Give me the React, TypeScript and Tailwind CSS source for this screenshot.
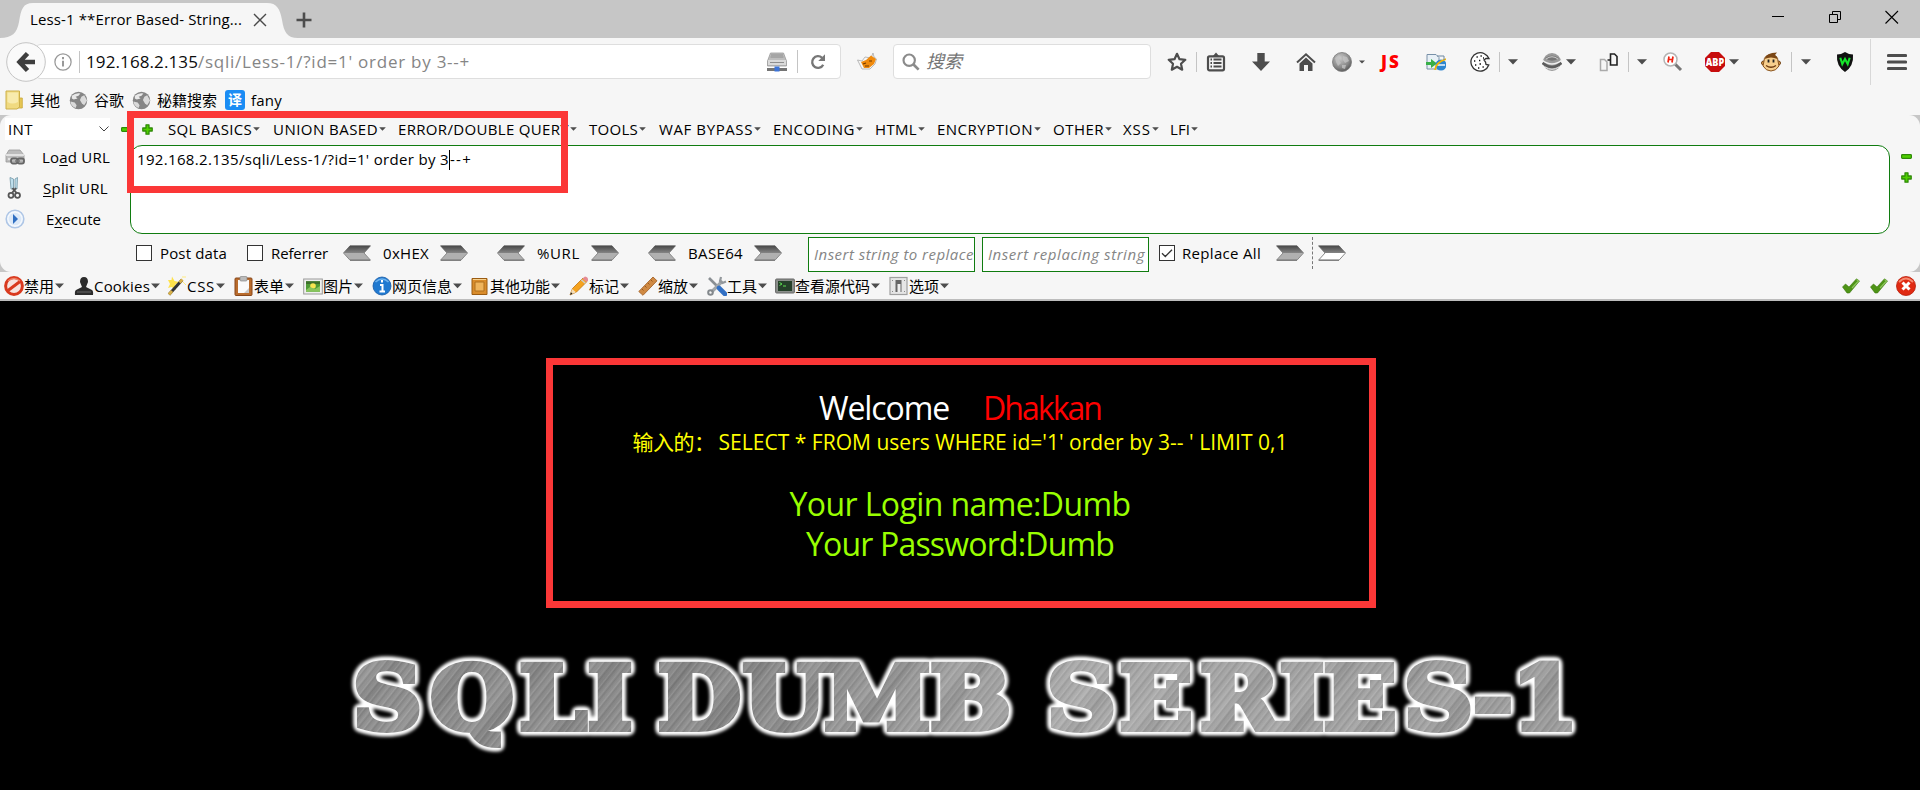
import { useLayoutEffect, useRef, useState } from "react";
import type { ReactNode } from "react";

const SANS = "font-['Open_Sans','Noto_Sans_CJK_SC',sans-serif]";

/* Text set to a given width: letter spacing is worked out after measuring. */
function Label({ children, w, className = "" }: { children: ReactNode; w: number; className?: string }) {
  const ref = useRef<HTMLSpanElement>(null);
  const [spacing, setSpacing] = useState(0);
  useLayoutEffect(() => {
    const el = ref.current;
    if (!el) return;
    const n = (el.textContent ?? "").length;
    setSpacing((w - el.getBoundingClientRect().width) / n);
  }, [w]);
  return (
    <span className={`block shrink-0 whitespace-pre ${className}`} style={{ width: w }}>
      <span ref={ref} className="inline-block" style={{ letterSpacing: spacing }}>
        {children}
      </span>
    </span>
  );
}

function Svg({ children, className = "w-5 h-5", box = "0 0 20 20" }: { children: ReactNode; className?: string; box?: string }) {
  return (
    <svg viewBox={box} className={`block shrink-0 ${className}`} fill="none">
      {children}
    </svg>
  );
}

function Caret({ className = "w-[10px] h-[6px]" }: { className?: string }) {
  return (
    <Svg box="0 0 10 6" className={className}>
      <path d="M0 0.3H10L5 5.5Z" fill="#4d4d4d" />
    </Svg>
  );
}

function Plus() {
  return (
    <Svg box="0 0 11 11" className="w-[11px] h-[11px]">
      <path d="M4 .8H7V4H10.2V7H7V10.2H4V7H.8V4H4Z" fill="#4fd000" stroke="#2f8a08" strokeWidth="1.3" strokeLinejoin="round" />
    </Svg>
  );
}

function Minus() {
  return (
    <Svg box="0 0 11 5" className="w-[11px] h-[5px]">
      <rect x=".6" y=".6" width="9.8" height="3.8" rx=".8" fill="#4fd000" stroke="#2f8a08" strokeWidth="1.2" />
    </Svg>
  );
}

function Arrow({ left = false, hollow = false, className = "" }: { left?: boolean; hollow?: boolean; className?: string }) {
  return (
    <Svg box="0 0 28 16" className={`w-7 h-4 ${left ? "-scale-x-100" : ""} ${className}`}>
      <path d="M.5 .8H21L27.5 8L21 15.2H.5L7 8Z" fill={hollow ? "#fff" : "#b0b0b0"} stroke="#8a8a8a" strokeWidth="1" />
      <path d="M.5 .8H21L27.5 8H7Z" fill="url(#arrowDark)" />
      <path d="M1 15.2H21" stroke="#777" strokeWidth="1.2" />
    </Svg>
  );
}

function Check({ on = false, className = "" }: { on?: boolean; className?: string }) {
  return (
    <Svg box="0 0 16 16" className={`w-4 h-4 ${className}`}>
      <rect x=".5" y=".5" width="15" height="15" fill="#fff" stroke="#333" />
      {on && <path d="M3 8.2L6.3 11.5L13 4.7" stroke="#333" strokeWidth="1.3" />}
    </Svg>
  );
}

function Globe({ className = "" }: { className?: string }) {
  return (
    <Svg className={`w-[19px] h-[19px] ${className}`}>
      <circle cx="10" cy="10" r="9.2" fill="#858585" />
      <path d="M3 5Q7 1.500 12 2.500L10 5L7 6L9 8L5 9L3 8Z" fill="#e8e8e8" />
      <path d="M13 6L16 4.500L19 10L16 15L13.500 13L11.500 9.500Z" fill="#dadada" />
      <path d="M1.500 11L6 12L8 15L7 18Q2 16 1.500 11Z" fill="#dadada" />
    </Svg>
  );
}

function Sep({ className = "h-5" }: { className?: string }) {
  return <div className={`w-px shrink-0 bg-[#c4c4c4] ${className}`} />;
}

function TitleBar() {
  return (
    <div className="flex h-[38px] bg-[#c6c6c6]">
      <div className="relative h-[38px] w-[298px] shrink-0">
        <svg viewBox="0 0 298 38" className="absolute inset-0 h-[38px] w-[298px]">
          <path d="M0 38C12 38 17 33 19 22C21 9 23 3 33 3H267C277 3 280 9 282 20C284 32 287 38 298 38Z" fill="#f6f6f6" />
        </svg>
        <div className="relative flex h-[38px] items-center pl-[30px] pt-0.5">
          <Label w={212} className="-mt-0.5 text-[15px] text-black">Less-1 **Error Based- String...</Label>
          <Svg box="0 0 14 14" className="ml-[11px] h-[14px] w-[14px]">
            <path d="M1 1L13 13M13 1L1 13" stroke="#4a4a4a" strokeWidth="1.400" />
          </Svg>
        </div>
      </div>
      <Svg box="0 0 16 16" className="-ml-0.5 mt-3 h-4 w-4">
        <path d="M8 .5V15.500M.5 8H15.500" stroke="#4d4d4d" strokeWidth="2.600" />
      </Svg>
      <div className="ml-auto flex pr-[21px] pt-[10px]">
        <Svg box="0 0 14 14" className="mr-[43px] h-[14px] w-[14px]">
          <path d="M1 6.500H13" stroke="#000" />
        </Svg>
        <Svg box="0 0 14 14" className="mr-[43px] h-[14px] w-[14px]">
          <path d="M1.500 4.500H9.500V12.500H1.500ZM4.500 4V1.500H12.500V9.500H10" stroke="#000" />
        </Svg>
        <Svg box="0 0 14 14" className="h-[14px] w-[14px]">
          <path d="M.5 1L13 13.500M13 1L.5 13.500" stroke="#000" strokeWidth="1.100" />
        </Svg>
      </div>
    </div>
  );
}

function NavIcons() {
  return (
    <div className="flex items-center">
      <Svg className="ml-4 h-5 w-5">
        <path d="M10 1.800L12.500 7.200L18.300 7.800L14 11.800L15.200 17.700L10 14.800L4.800 17.700L6 11.800L1.700 7.800L7.500 7.200Z" stroke="#4d4d4d" strokeWidth="2.200" strokeLinejoin="round" />
      </Svg>
      <Sep className="ml-[9px] h-5" />
      <Svg className="ml-[9px] h-5 w-5">
        <path d="M6.500 4.500L10 .5L13.500 4.500Z" fill="#4d4d4d" />
        <rect x="2" y="4.300" width="16" height="14" rx="1.500" stroke="#4d4d4d" strokeWidth="2.200" />
        <path d="M4.500 7.500H6M7.500 7.500H15.500M4.500 11H6M7.500 11H15.500M4.500 14.500H6M7.500 14.500H15.500" stroke="#4d4d4d" strokeWidth="1.800" />
      </Svg>
      <Svg className="ml-[25px] h-5 w-5">
        <path d="M6.300 1H13.700V9.500H19L10 19L1 9.500H6.300Z" fill="#4d4d4d" />
      </Svg>
      <Svg className="ml-[25px] h-5 w-5">
        <path d="M1 10.500L10 2.300L19 10.500" stroke="#4d4d4d" strokeWidth="2" />
        <path d="M3.500 11.500L10 5.600L16.500 11.500V19H12V13H8V19H3.500Z" fill="#4d4d4d" />
      </Svg>
      <Svg className="ml-4 h-5 w-5">
        <circle cx="10" cy="10" r="9.500" fill="url(#ball)" stroke="#777" strokeWidth=".8" />
        <path d="M3 6L7 3L9 5L7 8L9 11L6 14L4 10ZM11 4L15 5L17 9L13 11L11 8ZM10 13L14 13L13 17L10 16Z" fill="#c4c4c4" opacity=".75" />
      </Svg>
      <Caret className="ml-[7px] h-[4px] w-[6px]" />
      <Label w={20} className="ml-4 text-[17px] font-extrabold leading-5 text-[#f00]">JS</Label>
      <Svg className="ml-[25px] h-5 w-5">
        <path d="M1 2.500H10L13 5.500V17H1Z" fill="#e8f0f6" stroke="#7890a8" />
        <path d="M0 10H5V7L11 11.500L5 16V13H0Z" fill="#38b048" />
        <circle cx="15" cy="13" r="5.500" fill="#2e86d0" />
        <path d="M11 13H19" stroke="#fff" strokeWidth="1.400" />
        <path d="M9 18Q10 10 20 7" stroke="#f4b400" strokeWidth="1.800" />
        <path d="M11 4H18V8" stroke="#6d87a0" />
      </Svg>
      <Svg className="ml-[24px] h-5 w-5">
        <path d="M14.500 1.800A9.200 9.200 0 1 0 18.800 13L16 12.500L15.500 10L14 8L16 6.500L19 6.500Q17.500 3 14.500 1.800Z" fill="#fff" stroke="#333" strokeWidth="1.300" />
        <path d="M6.500 5h1.300M10.500 4h1.300M4 9h1.300M9 8.500h1.300M5 13h1.300M9.500 12h1.500M12.500 15h1.300M8 16h1.300M13 6h1" stroke="#111" strokeWidth="1.300" />
      </Svg>
      <Sep className="ml-[9px] h-5" />
      <Caret className="ml-[8px] h-[6px] w-[10px]" />
      <Svg className="ml-[24px] h-5 w-5">
        <circle cx="10" cy="10" r="9" fill="#9a9a9a" />
        <path d="M0 8Q10 16 20 8" stroke="#f0f0f0" strokeWidth="1.500" />
        <path d="M3 6Q10 1 17 6Q10 11.500 3 6Z" fill="#777" />
        <path d="M4 7Q10 2.500 16 7" stroke="#ccc" strokeWidth="1" />
        <path d="M.5 11Q10 19 19.500 11" stroke="#5d5d5d" strokeWidth="2.400" />
        <path d="M3 15Q10 19.500 17 15" stroke="#e8e8e8" strokeWidth="1" />
      </Svg>
      <Caret className="ml-1 h-[6px] w-[10px]" />
      <Svg className="ml-[23px] h-5 w-5">
        <path d="M1.500 7.500H5.500L8 10V18.500H1.500Z" stroke="#aaa" strokeWidth="1.500" />
        <path d="M11.500 2H15.500L18 4.500V13H11.500Z" stroke="#222" strokeWidth="1.600" />
        <path d="M8.500 8H11.500" stroke="#222" strokeWidth="1.500" />
      </Svg>
      <Sep className="ml-[9px] h-5" />
      <Caret className="ml-[8px] h-[6px] w-[10px]" />
      <Svg className="ml-[16px] h-5 w-5">
        <path d="M12 12L18 18" stroke="#777" strokeWidth="3" />
        <circle cx="7.500" cy="7.500" r="6.500" fill="#fff" stroke="#b4b4b4" strokeWidth="1.500" />
        <path d="M6 4.500L5 10.500M10 4.500L9 10.500M5.500 7.500H9.500" stroke="#e21" strokeWidth="1.700" />
      </Svg>
      <Svg className="ml-[22px] h-5 w-5">
        <path d="M6 0H14L20 6V14L14 20H6L0 14V6Z" fill="#c70d0d" />
        <text x=".8" y="13.800" textLength="18.400" lengthAdjust="spacingAndGlyphs" fontSize="10.500" fontWeight="800" fill="#fff" fontFamily="Open Sans">ABP</text>
      </Svg>
      <Caret className="ml-1 h-[6px] w-[10px]" />
      <Svg className="ml-[22px] h-5 w-5">
        <circle cx="2.500" cy="11" r="2" fill="#d89a4a" stroke="#704214" />
        <circle cx="17.500" cy="11" r="2" fill="#d89a4a" stroke="#704214" />
        <path d="M3 9Q3 3 10 3T17 9L18 14Q15 19 10 19T2 14Z" fill="#f7cf8d" stroke="#8a5520" />
        <path d="M3.500 7Q5 .5 16 .5L14 3Q16.500 4.500 16.500 7Q10 4 3.500 7Z" fill="#7b4716" />
        <path d="M7.500 7.500V10.500M12.500 7.500V10.500" stroke="#222" strokeWidth="1.800" />
        <path d="M5 13.500Q10 17 15 13.500" stroke="#6d3a10" strokeWidth="1.300" />
      </Svg>
      <Sep className="ml-[10px] h-5" />
      <Caret className="ml-[9px] h-[6px] w-[10px]" />
      <Svg className="ml-[24px] h-5 w-5">
        <path d="M10 0Q14 2.500 18 2.500Q19 14 10 20Q1 14 2 2.500Q6 2.500 10 0Z" fill="#111" />
        <path d="M5.300 5.800L7.300 12L10 7L12.700 12L14.700 5.800" stroke="#15e52a" strokeWidth="2.100" />
      </Svg>
      <Sep className="ml-[15px] h-[46px] opacity-60" />
      <Svg className="ml-4 h-5 w-5">
        <path d="M1.500 3.500H18.500M1.500 10H18.500M1.500 16.500H18.500" stroke="#4d4d4d" strokeWidth="3.200" strokeLinecap="round" />
      </Svg>
    </div>
  );
}

function NavBar() {
  return (
    <div className="flex h-[47px] items-center">
      <div className="relative ml-[6px] flex h-10 w-[836px] shrink-0 items-center">
        <div className="ml-[30px] flex h-[35px] w-[805px] items-center rounded-sm border border-[#dedede] bg-white pl-[17px]">
          <Svg className="h-[18px] w-[18px]">
            <circle cx="10" cy="10" r="9" stroke="#999" strokeWidth="1.400" />
            <path d="M10 4.500V7M10 8.500V15" stroke="#999" strokeWidth="2.200" />
          </Svg>
          <Sep className="ml-[7px] h-[22px]" />
          <div className="ml-[6px] flex text-[17px] leading-6">
            <Label w={112} className="text-[#0c0c0c]">192.168.2.135</Label>
            <Label w={272} className="text-[#858585]">/sqli/Less-1/?id=1' order by 3--+</Label>
          </div>
          <Svg className="ml-[297px] h-5 w-5">
            <path d="M3.500 1H16.500L19.500 9V14H.5V9Z" fill="#bdbdbd" stroke="#999" strokeWidth=".8" />
            <path d="M1 8H19V13H1Z" fill="#dadada" />
            <path d="M4 3H16M3.500 5H16.500M3 10.500H17" stroke="#8e8e8e" />
            <path d="M0 16H20V19H0Z" fill="#747474" />
            <rect x="7.500" y="14.500" width="5" height="5" fill="#3d74d8" />
          </Svg>
          <Sep className="ml-[10px] h-[23px]" />
          <Svg className="ml-[11px] h-[18px] w-[18px]">
            <path d="M15.800 13A6.500 6.500 0 1 1 14.500 5.300" stroke="#777" strokeWidth="2.600" />
            <path d="M17.800 1.500V9H10.300Z" fill="#777" />
          </Svg>
        </div>
        <Svg box="0 0 40 40" className="absolute left-0 top-0 h-10 w-10">
          <circle cx="20" cy="20" r="19.300" fill="#fafafa" stroke="#c4c4c4" strokeWidth="1" />
          <path d="M29 20H15M21.500 11.500L13.500 20L21.500 28.500" stroke="#3e3e3e" strokeWidth="4.600" />
        </Svg>
      </div>
      <Svg className="ml-[15px] h-5 w-5">
        <path d="M.5 8L5 9L8 5L14 6L16 1L17 5L19.500 7L18 12L13 17H5Z" fill="#f6f6f6" stroke="#aaa" strokeWidth=".8" />
        <path d="M4 10L9 8L14 3.500L19 7L17 12L12 16H7Z" fill="#f08a0c" />
        <path d="M6 12L9 11M12 9L15 9M8 14L12 14" stroke="#713900" strokeWidth="1.200" />
      </Svg>
      <div className="ml-4 flex h-[35px] w-[258px] shrink-0 items-center rounded-sm border border-[#dedede] bg-white pl-2">
        <Svg className="h-[18px] w-[18px]">
          <circle cx="8" cy="8" r="6.300" stroke="#8b8b8b" strokeWidth="2.400" />
          <path d="M12.500 12.500L18.500 18.500" stroke="#8b8b8b" strokeWidth="3" />
        </Svg>
        <span className="ml-[6px] text-[18px] italic text-[#757575]">搜索</span>
      </div>
      <NavIcons />
    </div>
  );
}

function Bookmarks() {
  return (
    <div className="flex h-[30px] items-center pl-[5px] text-[15px] text-black">
      <Svg className="h-5 w-[18px]" box="0 0 18 20">
        <path d="M14 8H17.300V18H9L14 16Z" fill="#e6c654" stroke="#c9a83a" strokeWidth=".8" />
        <path d="M1 1H14.500V17L12 19H1Z" fill="#f0da80" stroke="#cdb04a" />
        <path d="M2.500 2.500H13V12Q7 15 2.500 12Z" fill="#f8ebad" />
      </Svg>
      <Label w={30} className="ml-[7px]">其他</Label>
      <Globe className="ml-[9px]" />
      <Label w={30} className="ml-[6px]">谷歌</Label>
      <Globe className="ml-[8px]" />
      <Label w={60} className="ml-[6px]">秘籍搜索</Label>
      <span className="ml-[8px] flex h-5 w-5 shrink-0 items-center justify-center rounded-[3px] bg-[#1a8cf4] text-[14px] font-bold leading-none text-white">译</span>
      <Label w={31} className="ml-[6px]">fany</Label>
    </div>
  );
}

const menus: [string, number, number][] = [
  ["SQL BASICS", 84, 105],
  ["UNION BASED", 105, 125],
  ["ERROR/DOUBLE QUERY", 171, 191],
  ["TOOLS", 49, 70],
  ["WAF BYPASS", 94, 114],
  ["ENCODING", 82, 102],
  ["HTML", 42, 62],
  ["ENCRYPTION", 96, 116],
  ["OTHER", 51, 70],
  ["XSS", 28, 47],
  ["LFI", 20, 40],
];

function Converter({ name, w, className }: { name: string; w: number; className: string }) {
  return (
    <div className={`flex shrink-0 items-center ${className}`}>
      <Arrow left />
      <Label w={w} className="ml-[12px] mr-[11px]">{name}</Label>
      <Arrow />
    </div>
  );
}

function HackBar() {
  return (
    <div className="bg-[#c6c6c6]">
      <div className="flex h-[157px] rounded-[11px] bg-[#f6f6f6] text-[15px] leading-5 text-black">
        <div className="w-[110px] shrink-0 pl-[5px] pt-[3px]">
          <div className="flex h-[22px] items-center bg-white pl-[3px]">
            <Label w={25}>INT</Label>
            <Svg box="0 0 10 6" className="ml-[66px] h-[6px] w-[10px]">
              <path d="M.5 .5L5 5L9.500 .5" stroke="#444" />
            </Svg>
          </div>
          <div className="mt-px flex h-[31px] items-center">
            <Svg>
              <path d="M4 3H15L19 8V15H1V8Z" fill="#bcbcbc" stroke="#999" strokeWidth=".8" />
              <path d="M1 8H19M3 12H12" stroke="#eee" strokeWidth="1.500" />
              <rect x="6" y="11.500" width="6.500" height="5" rx="2" stroke="#666" strokeWidth="1.800" />
              <rect x="12.500" y="11.500" width="6.500" height="5" rx="2" stroke="#666" strokeWidth="1.800" />
              <path d="M10 14H15" stroke="#777" strokeWidth="1.500" />
            </Svg>
            <Label w={68} className="ml-[17px]">Lo<u className="underline-offset-2">a</u>d URL</Label>
          </div>
          <div className="flex h-[31px] items-center">
            <Svg box="0 0 20 22" className="h-[22px] w-5">
              <path d="M5 .5L8.500 2V12H6ZM12.500 .5L10 2V12H12Z" fill="#bfe0ee" stroke="#7d9fae" strokeWidth=".9" />
              <path d="M7.500 11L11.500 16M11 11L7 16" stroke="#555" strokeWidth="2" />
              <circle cx="6" cy="18.300" r="2.500" stroke="#555" strokeWidth="1.800" />
              <circle cx="12.500" cy="18.300" r="2.500" stroke="#555" strokeWidth="1.800" />
            </Svg>
            <Label w={65} className="ml-[18px]"><u className="underline-offset-2">S</u>plit URL</Label>
          </div>
          <div className="flex h-[31px] items-center">
            <Svg>
              <circle cx="10" cy="10" r="8.800" fill="#f4f8fd" stroke="#aec6e6" strokeWidth="1.600" />
              <circle cx="10" cy="10" r="6.300" fill="#dce9f8" />
              <path d="M8 5L13 10L8 15Z" fill="#2f6fc2" />
            </Svg>
            <Label w={55} className="ml-[21px]">E<u className="underline-offset-2">x</u>ecute</Label>
          </div>
        </div>
        <div className="flex w-[1810px] flex-col">
          <div className="flex h-[30px] items-center pb-0.5 pl-[11px]">
            <Minus />
            <div className="ml-[10px]"><Plus /></div>
            <div className="ml-[15px] flex">
              {menus.map(([name, w, cell]) => (
                <div key={name} className="flex shrink-0 items-center" style={{ width: cell }}>
                  <Label w={w}>{name}</Label>
                  <Caret className="ml-px h-[4px] w-[7px]" />
                </div>
              ))}
            </div>
          </div>
          <div className="flex h-[89px]">
            <div className="ml-5 flex h-[89px] w-[1760px] rounded-xl border border-[#107c10] bg-white pl-[6px] pt-[3px]">
              <Label w={312}>192.168.2.135/sqli/Less-1/?id=1' order by 3</Label>
              <div className="mt-px h-5 w-px bg-black" />
              <Label w={22}>--+</Label>
            </div>
            <div className="flex flex-col gap-[13px] pl-[11px] pt-[9px]">
              <Minus />
              <Plus />
            </div>
          </div>
          <div className="flex h-[38px] items-center pl-[26px]">
            <Check />
            <Label w={67} className="ml-2">Post data</Label>
            <Check className="ml-5" />
            <Label w={57} className="ml-2">Referrer</Label>
            <Converter name="0xHEX" w={46} className="ml-[15px]" />
            <Converter name="%URL" w={43} className="ml-[29px]" />
            <Converter name="BASE64" w={55} className="ml-[29px]" />
            <div className="ml-[26px] mt-0.5 flex h-[35px] w-[167px] shrink-0 items-center overflow-hidden border border-[#107c10] bg-white pl-[5px] italic text-[#858585]">
              <Label w={160}>Insert string to replace</Label>
            </div>
            <div className="ml-[7px] mt-0.5 flex h-[35px] w-[167px] shrink-0 items-center overflow-hidden border border-[#107c10] bg-white pl-[5px] italic text-[#858585]">
              <Label w={157}>Insert replacing string</Label>
            </div>
            <Check on className="ml-[10px]" />
            <Label w={79} className="ml-[7px]">Replace All</Label>
            <Arrow className="ml-[15px]" />
            <div className="ml-2 h-8 w-px border-l border-dashed border-[#777]" />
            <Arrow hollow className="ml-[5px]" />
          </div>
        </div>
      </div>
    </div>
  );
}

const tools: { name: string; w: number; cell: number; icon: ReactNode }[] = [
  {
    name: "禁用", w: 30, cell: 70,
    icon: <><circle cx="10" cy="10" r="8.400" fill="#f6e4e0" stroke="#d93a1f" strokeWidth="3" /><path d="M4 14.500L16 5.500" stroke="#d93a1f" strokeWidth="3" /><path d="M4 5Q10 0 16 5" stroke="#ef8064" strokeWidth="1.300" /></>,
  },
  {
    name: "Cookies", w: 56, cell: 93,
    icon: <><path d="M6 6Q6 1 10 1T14 6L12 11L18 14Q19.500 15 19 19H1Q.5 15 2 14L8 11Z" fill="#2c2c2c" /><path d="M3 16H17" stroke="#666" /></>,
  },
  {
    name: "CSS", w: 28, cell: 67,
    icon: <><path d="M5 .5L7.500 5L12 6L8 9L9 14L4.500 11L1 12L3 8L1 4L4.500 4Z" fill="#ffe24a" /><path d="M2 18.500L15 4" stroke="#333" strokeWidth="3" /><path d="M2 18.500L5 15M12.500 6.500L15.500 3.500" stroke="#d6b04a" strokeWidth="3" /><path d="M16 6L19 9M15 1L19 1" stroke="#ffec80" /></>,
  },
  {
    name: "表单", w: 30, cell: 69,
    icon: <><rect x="1" y="2" width="17" height="17.500" rx="1" fill="#b96c2d" stroke="#88471b" /><path d="M4 4H15V17H4Z" fill="#fafafa" /><rect x="6" y=".5" width="7" height="4.500" rx="1" fill="#bbb" stroke="#888" strokeWidth=".7" /><path d="M15 12V17H10Z" fill="#c9c9c9" /></>,
  },
  {
    name: "图片", w: 30, cell: 69,
    icon: <><rect x=".7" y="3" width="18.600" height="15" fill="#efefef" stroke="#999" /><rect x="3" y="5.300" width="14" height="10.400" fill="#4f9a35" /><path d="M3 5.300H17V8H3Z" fill="#3d6f2b" /><circle cx="10" cy="10" r="2.800" fill="#f8e451" /><path d="M3 14L7 11L12 13L17 10V15.700H3Z" fill="#87c45c" /></>,
  },
  {
    name: "网页信息", w: 60, cell: 98,
    icon: <><circle cx="10" cy="10" r="9" fill="#2079d0" stroke="#1459a6" strokeWidth=".8" /><path d="M3.500 6Q10 0 16.500 6" stroke="#70b4ee" strokeWidth="1.600" /><path d="M10 4V6.500M8 9H10.500V15M7.500 15.500H13" stroke="#fff" strokeWidth="2" /></>,
  },
  {
    name: "其他功能", w: 60, cell: 99,
    icon: <><path d="M2 2.500H17V18.500H2Z" fill="#d98c2b" stroke="#9b5c12" /><path d="M5 6H14V15H5Z" fill="#efb45c" stroke="#b0701f" /><path d="M3 3.500H16" stroke="#f7d28f" /></>,
  },
  {
    name: "标记", w: 30, cell: 69,
    icon: <><path d="M1 19L3.500 12.500L14 2L18 5.500L7.500 16Z" fill="#f5a31f" stroke="#c07410" strokeWidth=".8" /><path d="M13.500 2.500L16 .5Q19.500 1 19 4.500L17.500 6Z" fill="#e58b94" /><path d="M12.300 3.700L16.300 7.300" stroke="#ccc" strokeWidth="1.500" /><path d="M1 19L3.300 13L7 16.300Z" fill="#f5deb8" /><path d="M1 19L2 16.300L3.600 17.800Z" fill="#222" /></>,
  },
  {
    name: "缩放", w: 30, cell: 69,
    icon: <><path d="M.8 15.500L15 1L19 4.800L5 19.300Z" fill="#d08a43" stroke="#a5642a" strokeWidth=".9" /><path d="M4 13L5.500 14.500M7 10L8.500 11.500M10 7L11.500 8.500M13 4L14.500 5.500" stroke="#9a5a20" /></>,
  },
  {
    name: "工具", w: 30, cell: 68,
    icon: <><path d="M2 2L12 12" stroke="#8a8f93" strokeWidth="2.600" /><path d="M4.500 16L15.500 5" stroke="#a2a7aa" strokeWidth="3.200" /><circle cx="3.500" cy="16.500" r="2.300" stroke="#83888c" strokeWidth="2" /><path d="M14 1L13 5L15.500 7L19 5.500" stroke="#92979b" strokeWidth="2.200" /><path d="M12 12L18 18" stroke="#3270c4" strokeWidth="4.600" strokeLinecap="round" /></>,
  },
  {
    name: "查看源代码", w: 75, cell: 114,
    icon: <><rect x=".6" y="3" width="18.800" height="14" rx="1" fill="#8b8f8b" stroke="#666" /><rect x="3" y="5" width="14" height="10" fill="#26402a" /><path d="M4.500 6.500L7 8L4.500 9.500M8 10H11" stroke="#5fe052" /></>,
  },
  {
    name: "选项", w: 30, cell: 70,
    icon: <><rect x="1" y="1.500" width="17" height="17" fill="#e6e6e6" stroke="#a0a0a0" strokeWidth="1.200" /><rect x="6.500" y="4" width="6" height="12" fill="#666" /><rect x="8.500" y="8" width="3" height="8" fill="#eee" /><path d="M3.500 4V5M3.500 15V16M15.500 4V5M15.500 15V16" stroke="#888" /></>,
  },
];

function Toolbar() {
  const tick = (
    <>
      <path d="M1.500 11L4.500 8L8 11L15.500 2.800L18.500 5L8.500 17H6Z" fill="#4e9416" stroke="#39740c" strokeWidth=".6" />
      <path d="M15.500 3.500L17.500 5L11 12" stroke="#8cc45c" strokeWidth="1.200" />
    </>
  );
  return (
    <div className="flex h-[29px] items-center border-b-2 border-[#bdbdbd] pl-1 text-[15px] leading-5 text-black">
      {tools.map((t) => (
        <div key={t.name} className="flex shrink-0 items-center" style={{ width: t.cell }}>
          <Svg>{t.icon}</Svg>
          <Label w={t.w}>{t.name}</Label>
          <Caret className="ml-px h-[6px] w-[9px]" />
        </div>
      ))}
      <div className="ml-auto flex pr-1">
        <Svg className="h-5 w-5">{tick}</Svg>
        <Svg className="ml-2 h-5 w-5">{tick}</Svg>
        <Svg className="ml-[7px] h-5 w-5">
          <circle cx="10" cy="10" r="9.500" fill="#e02a12" stroke="#b81c08" strokeWidth=".8" />
          <path d="M3 6Q10-1 17 6" stroke="#f58a70" strokeWidth="2" />
          <path d="M6.500 6.500L13.500 13.500M13.500 6.500L6.500 13.500" stroke="#fff" strokeWidth="3" />
        </Svg>
      </div>
    </div>
  );
}

const GLYPH_CENTRES = [
  387.500, 472, 553, 610, 644, 699.500, 784.500, 877.500, 970.500, 1030, 1081.500, 1156, 1240, 1302, 1360, 1438.500, 1493, 1545,
];
const STRETCH = 1.09;

function Banner() {
  return (
    <svg viewBox="330 630 1260 140" className="mx-auto block h-[140px] w-[1260px]">
      <defs>
        <linearGradient id="steel" gradientUnits="userSpaceOnUse" x1="300" y1="0" x2="1400" y2="0">
          <stop offset="0" stopColor="#8d8d8d" />
          <stop offset=".35" stopColor="#858585" />
          <stop offset=".5" stopColor="#999" />
          <stop offset=".62" stopColor="#a8a8a8" />
          <stop offset="1" stopColor="#999" />
        </linearGradient>
        <linearGradient id="sheen" gradientUnits="userSpaceOnUse" x1="0" y1="0" x2="44" y2="32" spreadMethod="repeat">
          <stop offset="0" stopColor="#fff" stopOpacity="0" />
          <stop offset=".3" stopColor="#fff" stopOpacity=".1" />
          <stop offset=".6" stopColor="#000" stopOpacity=".07" />
          <stop offset=".8" stopColor="#fff" stopOpacity=".04" />
          <stop offset="1" stopColor="#fff" stopOpacity="0" />
        </linearGradient>
        <linearGradient id="brushed" gradientUnits="userSpaceOnUse" x1="0" y1="0" x2="9.400" y2="6.800" spreadMethod="repeat">
          <stop offset="0" stopColor="#fff" stopOpacity=".02" />
          <stop offset=".12" stopColor="#fff" stopOpacity=".13" />
          <stop offset=".25" stopColor="#000" stopOpacity=".06" />
          <stop offset=".45" stopColor="#fff" stopOpacity=".03" />
          <stop offset=".6" stopColor="#fff" stopOpacity=".1" />
          <stop offset=".75" stopColor="#000" stopOpacity=".08" />
          <stop offset="1" stopColor="#fff" stopOpacity=".02" />
        </linearGradient>
        <pattern id="metal" patternUnits="userSpaceOnUse" width="1600" height="800">
          <rect width="1600" height="800" fill="url(#steel)" />
          <rect width="1600" height="800" fill="url(#sheen)" />
          <rect width="1600" height="800" fill="url(#brushed)" />
        </pattern>
        <filter id="halo" filterUnits="userSpaceOnUse" x="290" y="620" width="1200" height="160">
          <feGaussianBlur in="SourceAlpha" stdDeviation="2.600" result="soft" />
          <feComponentTransfer in="soft" result="fat">
            <feFuncA type="linear" slope="8" intercept="-.1" />
          </feComponentTransfer>
          <feFlood floodColor="#fff" />
          <feComposite in2="fat" operator="in" result="ring" />
          <feGaussianBlur in="ring" stdDeviation="1.500" result="glow" />
          <feMerge>
            <feMergeNode in="glow" />
            <feMergeNode in="SourceGraphic" />
          </feMerge>
        </filter>
      </defs>
      <g transform={`scale(${STRETCH} 1)`}>
        <text
          x={GLYPH_CENTRES.map((c) => (c / STRETCH).toFixed(1)).join(" ")}
          y="729"
          textAnchor="middle"
          fontFamily="DejaVu Serif"
          fontWeight="700"
          fontSize="88"
          fill="url(#metal)"
          stroke="url(#metal)"
          strokeWidth="6"
          filter="url(#halo)"
        >
          SQLI DUMB SERIES-1
        </text>
      </g>
    </svg>
  );
}

function Page() {
  return (
    <div className="flex h-[489px] flex-col bg-black pt-[57px]">
      <div className="ml-[546px] flex h-[250px] w-[830px] flex-col items-center border-[7px] border-[#fb3737] pr-0.5 pt-[21px]">
        <div className="flex text-[32px] leading-[44px]">
          <Label w={130} className="text-white">Welcome</Label>
          <Label w={118} className="ml-[34px] text-[#f00]">Dhakkan</Label>
        </div>
        <div className="-mt-0.5 flex text-[21px] leading-7 text-[#ff0]">
          <Label w={82}>输入的：</Label>
          <Label w={569} className="ml-[4px]">{"SELECT * FROM users WHERE id='1' order by 3-- ' LIMIT 0,1"}</Label>
        </div>
        <div className="mt-[28px] flex flex-col items-center text-[32px] leading-10 text-[#9f0]">
          <Label w={341}>Your Login name:Dumb</Label>
          <Label w={308}>Your Password:Dumb</Label>
        </div>
      </div>
      <div className="mt-[22px]">
        <Banner />
      </div>
    </div>
  );
}

export default function App() {
  return (
    <div className={`relative h-[790px] w-[1920px] overflow-hidden bg-[#f6f6f6] ${SANS}`}>
      <svg className="absolute h-0 w-0">
        <defs>
          <linearGradient id="arrowDark" x1="0" y1="0" x2="0" y2="1">
            <stop offset="0" stopColor="#484848" />
            <stop offset="1" stopColor="#858585" />
          </linearGradient>
          <radialGradient id="ball" cx=".4" cy=".3" r=".8">
            <stop offset="0" stopColor="#c8c8c8" />
            <stop offset=".6" stopColor="#8a8a8a" />
            <stop offset="1" stopColor="#4a4a4a" />
          </radialGradient>
        </defs>
      </svg>
      <TitleBar />
      <NavBar />
      <Bookmarks />
      <HackBar />
      <Toolbar />
      <Page />
      <div className="absolute left-[127px] top-[111px] h-[82px] w-[441px] border-[7px] border-[#fb3737]" />
    </div>
  );
}
